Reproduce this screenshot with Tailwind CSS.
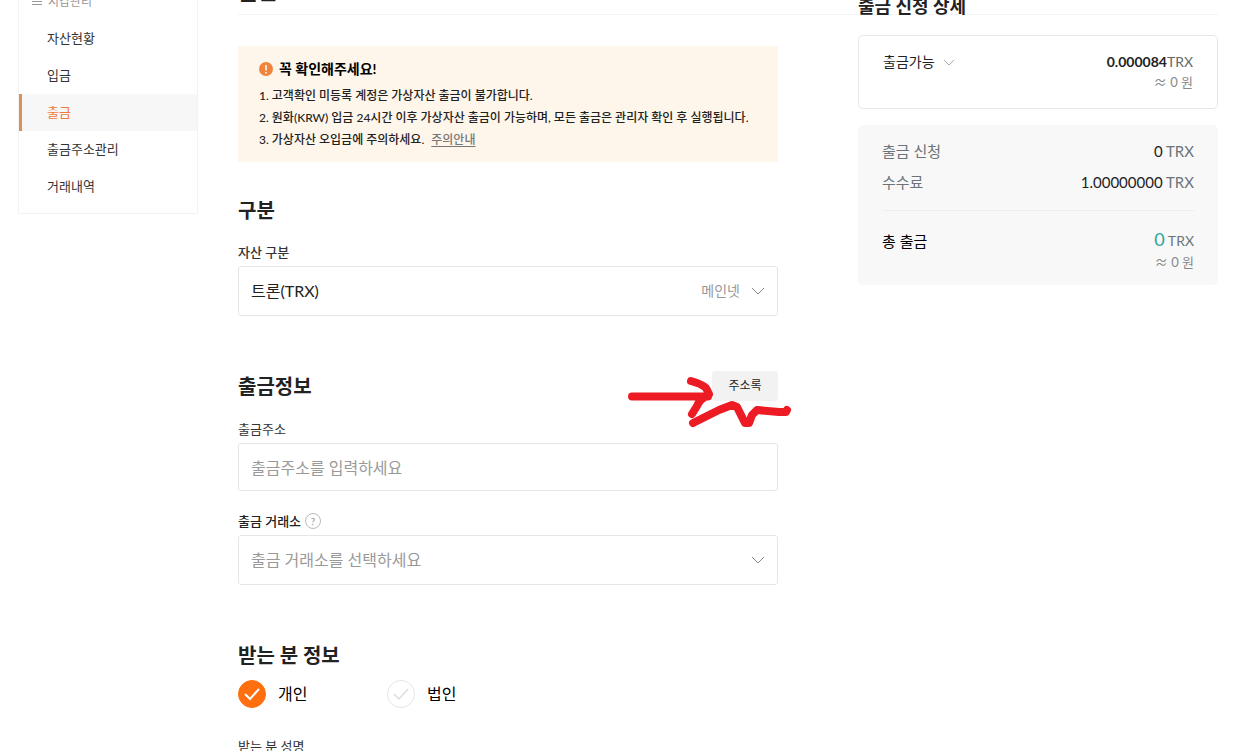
<!DOCTYPE html>
<html lang="ko">
<head>
    <meta charset="UTF-8">
    <meta name="viewport" content="width=device-width, initial-scale=1.0">
    <title>출금</title>
    <script src="https://cdn.jsdelivr.net/npm/@tailwindcss/browser@4"></script>
</head>
<body class="h-screen overflow-hidden bg-white font-[Lato,'Noto_Sans_CJK_KR',sans-serif] text-[#222]">

    <div class="-mt-10 flex items-start gap-10 pl-[18px] pr-[23px]">

        <!-- Side menu -->
        <nav class="w-[180px] shrink-0 border border-[#f2f2f2] pb-2 text-[13px] text-[#333]">
            <div class="flex h-[59px] items-center gap-[6px] pl-[13px] pt-[22px] text-xs text-[#999]">
                <svg class="size-[10px]" viewBox="0 0 10 10" fill="none" stroke="currentColor"><path d="M0 1.5h10M0 4.5h10M0 7.5h10"/></svg>
                지갑관리
            </div>
            <a href="#" class="flex h-[37px] items-center pl-7">자산현황</a>
            <a href="#" class="flex h-[37px] items-center pl-7">입금</a>
            <a href="#" class="flex h-[37px] items-center border-l-3 border-[#d9935a] bg-[#f7f7f8] pl-[25px] text-[#f07a3c]">출금</a>
            <a href="#" class="flex h-[37px] items-center pl-7">출금주소관리</a>
            <a href="#" class="flex h-[37px] items-center pl-7">거래내역</a>
        </nav>

        <div class="grid flex-1 grid-cols-[minmax(0,1fr)_360px] grid-rows-[auto_1fr] gap-x-20">
            <header class="col-span-2 col-start-1 row-start-1 border-b border-[#f4f4f4] pb-2 pt-4">
                <h1 class="text-[22px] font-bold leading-[30px]">출금</h1>
            </header>

            <main class="col-start-1 row-start-2">
                <!-- Notice -->
                <section class="mt-[31px] bg-[#fef6eb] px-[21px] py-[11px]">
                    <h2 class="flex items-center gap-[6px] text-sm font-bold leading-6 text-black">
                        <svg class="size-[14px]" viewBox="0 0 14 14"><circle cx="7" cy="7" r="7" fill="#f0843c"/><path d="M7 3v5.5M7 10v1.5" stroke="#fff" stroke-width="1.5"/></svg>
                        꼭 확인해주세요!
                    </h2>
                    <ol class="mt-1 text-xs leading-[22px] font-medium">
                        <li>1. 고객확인 미등록 계정은 가상자산 출금이 불가합니다.</li>
                        <li>2. 원화(KRW) 입금 24시간 이후 가상자산 출금이 가능하며, 모든 출금은 관리자 확인 후 실행됩니다.</li>
                        <li>3. 가상자산 오입금에 주의하세요. <a href="#" class="ml-1 text-[#777] underline underline-offset-2">주의안내</a></li>
                    </ol>
                </section>

                <!-- Asset -->
                <section class="mt-[33px]">
                    <h2 class="text-xl font-bold leading-[30px]">구분</h2>
                    <label for="asset" class="mt-[17px] block text-[13px] font-medium leading-5 text-[#333]">자산 구분</label>
                    <div class="relative mt-1">
                        <select id="asset" class="h-[50px] w-full appearance-none rounded-[3px] border border-[#e6e6e6] bg-white px-3 text-base">
                            <option>트론(TRX)</option>
                        </select>
                        <div class="pointer-events-none absolute inset-y-0 right-[13px] flex items-center gap-[11px] text-sm text-[#999]">
                            메인넷
                            <svg class="h-2 w-[14px]" viewBox="0 0 14 8" fill="none" stroke="#888"><path d="M1 1l6 6 6-6"/></svg>
                        </div>
                    </div>
                </section>

                <!-- Withdrawal info -->
                <section class="mt-[55px]">
                    <div class="relative flex items-center justify-between">
                        <h2 class="text-xl font-bold leading-[30px]">출금정보</h2>
                        <button type="button" class="h-[30px] w-[66px] rounded-[3px] bg-[#f2f2f2] text-xs">주소록</button>
                        <!-- Hand-drawn arrow pointing at the address book button -->
                        <svg class="pointer-events-none absolute -right-4 top-0 h-[60px] w-[170px]" viewBox="624 371 170 60" fill="none" stroke="#ed1c24" stroke-width="8" stroke-linecap="round" stroke-linejoin="round">
                            <path d="M632 396.500H708M691 381Q702 384 706 388L709 394Q699 400 697 406L692 414"/>
                            <path d="M693 423L719 410L732 405L737 407L745 423H749L752 415L757 410L779 412L786 412L787 410"/>
                        </svg>
                    </div>
                    <label for="address" class="mt-[18px] block text-[13px] leading-5 text-[#333]">출금주소</label>
                    <input id="address" type="text" placeholder="출금주소를 입력하세요" class="mt-1 h-12 w-full rounded-[3px] border border-[#e6e6e6] px-3 text-base placeholder:text-[#999]">
                    <div class="mt-5 flex items-center gap-1">
                        <label for="exchange" class="text-[13px] font-medium leading-5 text-[#222]">출금 거래소</label>
                        <button type="button" aria-label="도움말" class="flex size-4 items-center justify-center rounded-full border border-[#bbb] text-[10px] leading-none text-[#999]">?</button>
                    </div>
                    <div class="relative mt-1">
                        <select id="exchange" class="h-[50px] w-full appearance-none rounded-[3px] border border-[#e6e6e6] bg-white px-3 text-base text-[#999]">
                            <option>출금 거래소를 선택하세요</option>
                        </select>
                        <div class="pointer-events-none absolute inset-y-0 right-[13px] flex items-center">
                            <svg class="h-2 w-[14px]" viewBox="0 0 14 8" fill="none" stroke="#888"><path d="M1 1l6 6 6-6"/></svg>
                        </div>
                    </div>
                </section>

                <!-- Recipient -->
                <section class="mt-[55px]">
                    <h2 class="text-xl font-bold leading-[30px]">받는 분 정보</h2>
                    <div class="mt-[10px] flex text-base text-black">
                        <label class="flex w-[149px] items-center gap-3">
                            <span class="grid size-7">
                                <input type="radio" name="recipient" checked class="col-start-1 row-start-1 appearance-none rounded-full border border-[#e5e5e5] checked:border-[#ff6f0f] checked:bg-[#ff6f0f]">
                                <svg class="pointer-events-none col-start-1 row-start-1 size-7" viewBox="0 0 28 28" fill="none" stroke="#fff" stroke-width="2"><path d="M7 14l5 5 9-10"/></svg>
                            </span>
                            개인
                        </label>
                        <label class="flex items-center gap-3">
                            <span class="grid size-7">
                                <input type="radio" name="recipient" class="col-start-1 row-start-1 appearance-none rounded-full border border-[#e5e5e5] checked:border-[#ff6f0f] checked:bg-[#ff6f0f]">
                                <svg class="pointer-events-none col-start-1 row-start-1 size-7" viewBox="0 0 28 28" fill="none" stroke="#ddd" stroke-width="1.500"><path d="M7 14l5 5 9-10"/></svg>
                            </span>
                            법인
                        </label>
                    </div>
                    <label for="name" class="mt-7 block text-[13px] leading-5 text-[#333]">받는 분 성명</label>
                    <input id="name" type="text" class="mt-1 h-12 w-full rounded-[3px] border border-[#e6e6e6] px-3 text-base">
                </section>
            </main>

            <!-- Summary -->
            <aside class="col-start-2 row-span-2 row-start-1 pt-8">
                <h2 class="text-lg font-bold leading-7">출금 신청 상세</h2>
                <div class="mt-[15px] flex justify-between rounded-[5px] border border-[#e8e8e8] px-6 py-4 text-sm leading-5">
                    <button type="button" class="flex h-5 items-center gap-2">
                        출금가능
                        <svg class="h-[7px] w-3" viewBox="0 0 12 7" fill="none" stroke="#aaa"><path d="M1 1l5 5 5-5"/></svg>
                    </button>
                    <div class="text-right">
                        <p><strong>0.000084</strong><span class="text-[#666]">TRX</span></p>
                        <p class="text-[13px] leading-5 text-[#888]"><span class="font-['Noto_Sans_CJK_KR']">≈</span> 0 원</p>
                    </div>
                </div>
                <div class="mt-4 rounded-[5px] bg-[#f8f8f8] px-6 pb-[13px] pt-[11px] text-[15px]">
                    <dl class="border-b border-[#eee] pb-3 leading-[31px]">
                        <div class="flex justify-between">
                            <dt class="text-[#6b7478]">출금 신청</dt>
                            <dd class="text-[#6b7478]"><span class="text-[#222]">0</span> TRX</dd>
                        </div>
                        <div class="flex justify-between">
                            <dt class="text-[#6b7478]">수수료</dt>
                            <dd class="text-[#6b7478]"><span class="text-[#222]">1.00000000</span> TRX</dd>
                        </div>
                    </dl>
                    <dl class="flex justify-between pt-[19px] leading-[22px]">
                        <dt class="text-black">총 출금</dt>
                        <dd class="text-right text-sm leading-[22px] text-[#6b7478]">
                            <p><span class="text-lg leading-none text-[#2ba5a0]">0</span> TRX</p>
                            <p class="text-[13px] leading-5 text-[#888]"><span class="font-['Noto_Sans_CJK_KR']">≈</span> 0 원</p>
                        </dd>
                    </dl>
                </div>
            </aside>
        </div>
    </div>

</body>
</html>
